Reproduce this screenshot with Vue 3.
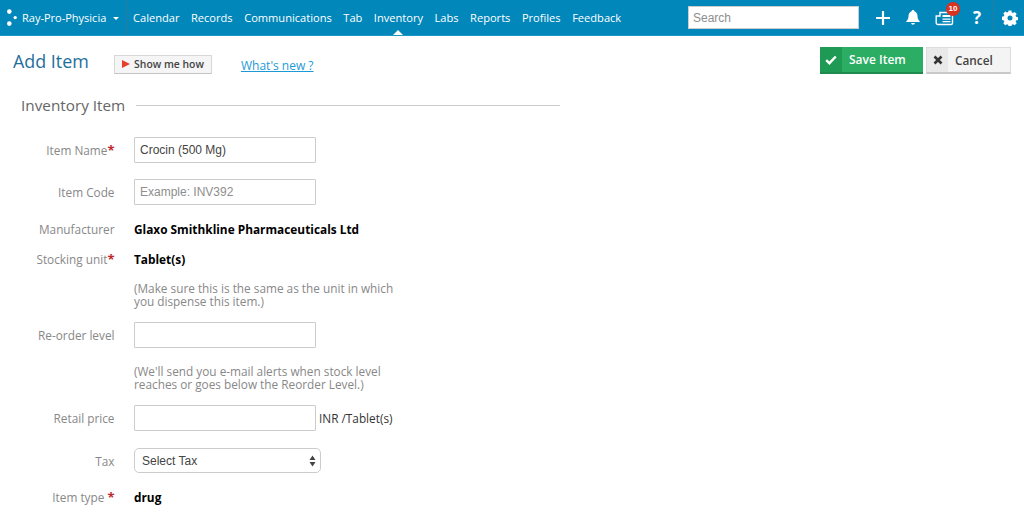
<script setup>
const navItems = ['Calendar', 'Records', 'Communications', 'Tab', 'Inventory', 'Labs', 'Reports', 'Profiles', 'Feedback']
</script>

<template>
  <div class="page">
    <header class="topbar">
      <div class="brand">
        <svg class="logo" width="12" height="18" viewBox="0 0 12 18">
          <circle cx="3.300" cy="2.600" r="2.300" fill="#fff" />
          <circle cx="9.200" cy="8.600" r="1.700" fill="#fff" />
          <circle cx="3.300" cy="14.600" r="2.300" fill="#fff" />
        </svg>
        <span class="brand-name">Ray-Pro-Physicia</span>
        <span class="caret"></span>
      </div>
      <nav class="nav">
        <a v-for="item in navItems" :key="item" class="nav-item" :class="{ active: item === 'Inventory' }">{{ item }}</a>
      </nav>
      <input class="search" placeholder="Search" />
      <div class="tools">
        <svg class="plus" width="16" height="16" viewBox="0 0 16 16"><path d="M8 1v14M1 8h14" stroke="#fff" stroke-width="2.200" /></svg>
        <svg class="bell" width="16" height="16" viewBox="0 0 16 16"><path d="M8 1c.8 0 1.300.5 1.400 1.200C11.500 3 12.500 5 12.500 7c0 2.500.8 3.800 2.200 5.200v.8H1.300v-.8C2.700 10.800 3.500 9.500 3.500 7c0-2 1-4 3.100-4.800C6.700 1.500 7.200 1 8 1zM6.200 14h3.600c0 1-.8 1.700-1.800 1.700S6.200 15 6.200 14z" fill="#fff" /></svg>
        <div class="news">
          <svg width="19" height="16" viewBox="0 0 19 16"><path d="M5 2.500h12.500v10.500a1.500 1.500 0 0 1-1.500 1.500H3a1.800 1.800 0 0 1-1.800-1.800V6H5z" fill="none" stroke="#fff" stroke-width="1.400" /><path d="M7.500 5h8v2h-8zM7.500 8.500h8v1.300h-8zM7.500 11h8v1.300h-8z" fill="#fff" /></svg>
          <span class="badge">10</span>
        </div>
        <span class="help">?</span>
        <span class="divider"></span>
        <svg class="gear" width="16" height="16" viewBox="0 0 16 16"><path fill="#fff" fill-rule="evenodd" d="M6.600.5h2.800l.4 2 1.200.5 1.700-1.100 2 2-1.100 1.700.5 1.200 2 .4v2.800l-2 .4-.5 1.200 1.100 1.700-2 2-1.700-1.100-1.200.5-.4 2H6.600l-.4-2-1.200-.5-1.700 1.100-2-2 1.100-1.700-.5-1.200-2-.4V6.700l2-.4.500-1.200-1.100-1.700 2-2 1.700 1.100 1.200-.5zM8 5.500a2.500 2.500 0 1 0 0 5 2.500 2.500 0 0 0 0-5z" /></svg>
      </div>
    </header>

    <div class="titlebar">
      <h1 class="title">Add Item</h1>
      <button class="howto"><span class="play"></span>Show me how</button>
      <a class="whatsnew">What's new ?</a>
      <div class="actions">
        <button class="save">
          <span class="save-icon"><svg width="12" height="10" viewBox="0 0 12 10"><path d="M1.200 5.200l3.200 3L10.800 1.500" fill="none" stroke="#fff" stroke-width="2.400" /></svg></span>
          <span class="save-label">Save Item</span>
        </button>
        <button class="cancel">
          <span class="cancel-icon"><svg width="10" height="10" viewBox="0 0 10 10"><path d="M1.500 1.500l7 7M8.500 1.500l-7 7" stroke="#333" stroke-width="2.600" /></svg></span>
          <span class="cancel-label">Cancel</span>
        </button>
      </div>
    </div>

    <section class="form">
      <div class="legend"><span>Inventory Item</span><i></i></div>

      <div class="row r-name">
        <label>Item Name<b>*</b></label>
        <input class="field" value="Crocin (500 Mg)" />
      </div>
      <div class="row r-code">
        <label>Item Code</label>
        <input class="field" placeholder="Example: INV392" />
      </div>
      <div class="row r-mfr">
        <label>Manufacturer</label>
        <strong>Glaxo Smithkline Pharmaceuticals Ltd</strong>
      </div>
      <div class="row r-unit">
        <label>Stocking unit<b>*</b></label>
        <strong>Tablet(s)</strong>
      </div>
      <p class="hint h-unit">(Make sure this is the same as the unit in which<br />you dispense this item.)</p>
      <div class="row r-level">
        <label>Re-order level</label>
        <input class="field" />
      </div>
      <p class="hint h-level">(We'll send you e-mail alerts when stock level<br />reaches or goes below the Reorder Level.)</p>
      <div class="row r-price">
        <label>Retail price</label>
        <input class="field" />
        <span class="unit">INR /Tablet(s)</span>
      </div>
      <div class="row r-tax">
        <label>Tax</label>
        <div class="select">
          <span>Select Tax</span>
          <svg width="7" height="12" viewBox="0 0 7 12"><path d="M3.500 0.500L6.500 5H.5zM3.500 11.500L.5 7h6z" fill="#444" /></svg>
        </div>
      </div>
      <div class="row r-type">
        <label>Item type <b>*</b></label>
        <strong>drug</strong>
      </div>
    </section>
  </div>
</template>

<style>
html, body { margin: 0; background: #fff; overflow: hidden; }
</style>

<style scoped>
.page {
  width: 1024px;
  height: 517px;
  overflow: hidden;
  font-family: "Open Sans", sans-serif;
  font-size: 12px;
  color: #222;
}
.topbar {
  height: 35px;
  background: #0287ba;
  border-bottom: 1px solid #1f96c6;
  display: flex;
  align-items: center;
  color: #fff;
}
.brand {
  width: 127px;
  height: 35px;
  box-sizing: border-box;
  border-right: 1px solid #2c7b9e;
  display: flex;
  align-items: center;
  padding-left: 6px;
}
.logo { margin-right: 4px; }
.brand-name { font-size: 11px; white-space: nowrap; }
.caret {
  margin-left: 7px;
  margin-top: 2px;
  border-left: 3px solid transparent;
  border-right: 3px solid transparent;
  border-top: 3px solid #fff;
}
.nav { display: flex; gap: 11.500px; margin-left: 6px; height: 35px; align-items: center; }
.nav-item { position: relative; font-size: 11.100px; white-space: nowrap; }
.nav-item.active::after {
  content: "";
  position: absolute;
  left: 50%;
  margin-left: -5px;
  top: 20px;
  border-left: 5px solid transparent;
  border-right: 5px solid transparent;
  border-bottom: 5px solid #fff;
}
.search {
  position: absolute;
  left: 688px;
  top: 6px;
  width: 171px;
  height: 23px;
  box-sizing: border-box;
  border: 1px solid #ccc;
  padding: 0 4px;
  font-family: "Liberation Sans", sans-serif;
  font-size: 12px;
  outline: none;
}
.search::placeholder, .field::placeholder { color: #8e8e8e; opacity: 1; }
.tools { position: absolute; left: 875px; top: 0; height: 35px; width: 149px; display: flex; align-items: center; }
.plus { margin-right: 14px; }
.bell { margin-right: 14px; margin-top: -1px; }
.news { position: relative; width: 19px; height: 16px; margin-right: 19px; }
.badge {
  position: absolute;
  left: 11px;
  top: -8px;
  width: 14px;
  height: 14px;
  border-radius: 50%;
  background: #d9321f;
  color: #fff;
  font: bold 8px/14px "Liberation Sans", sans-serif;
  text-align: center;
}
.help { font: bold 17px/1 "Open Sans", sans-serif; margin-right: 10px; width: 10px; }
.divider { width: 1px; height: 35px; background: #2c7b9e; margin-right: 8px; }
.titlebar { position: relative; height: 59px; }
.title {
  position: absolute;
  left: 13px;
  top: 12px;
  margin: 0;
  font-weight: 400;
  font-size: 17.900px;
  line-height: 26px;
  color: #1f6f9b;
}
.howto {
  position: absolute;
  left: 114px;
  top: 18.500px;
  width: 98px;
  height: 19px;
  padding: 0 0 1px;
  box-sizing: border-box;
  border: 1px solid #d8d8d8;
  border-bottom-color: #c4c4c4;
  background: #f5f5f5;
  font-family: "Open Sans", sans-serif;
  font-size: 10.400px;
  font-weight: 600;
  color: #444;
  display: flex;
  align-items: center;
  justify-content: center;
  gap: 4px;
}
.play {
  border-top: 4.500px solid transparent;
  border-bottom: 4.500px solid transparent;
  border-left: 8px solid #e6402c;
}
.whatsnew {
  position: absolute;
  left: 241px;
  top: 21px;
  font-size: 12px;
  line-height: 18px;
  color: #1d9ad6;
  text-decoration: underline;
}
.actions { position: absolute; left: 820px; top: 11px; display: flex; gap: 3px; }
.save {
  width: 103px;
  height: 27px;
  padding: 0;
  border: 0;
  border-bottom: 2px solid #1f8a4e;
  background: #2bad63;
  color: #fff;
  display: flex;
  font-family: "Open Sans", sans-serif;
  box-sizing: border-box;
}
.save-icon {
  width: 22px;
  height: 25px;
  background: #1f9a55;
  display: flex;
  align-items: center;
  justify-content: center;
}
.save-label { font-size: 12px; font-weight: 600; line-height: 25px; margin-left: 7px; }
.cancel {
  width: 85px;
  height: 27px;
  padding: 0;
  box-sizing: border-box;
  border: 1px solid #dcdcdc;
  border-bottom: 2px solid #c8c8c8;
  background: #f4f4f4;
  color: #444;
  display: flex;
  font-family: "Open Sans", sans-serif;
}
.cancel-icon {
  width: 21px;
  height: 24px;
  background: #e9e9e9;
  display: flex;
  align-items: center;
  justify-content: center;
}
.cancel-label { font-size: 11.800px; font-weight: 600; line-height: 24px; margin-left: 7px; }
.legend { display: flex; align-items: center; width: 560px; height: 20px; padding-left: 21px; box-sizing: border-box; }
.legend span { font-size: 15.300px; color: #666; line-height: 20px; }
.legend i { flex: 1; height: 1px; background: #ccc; margin-left: 11px; }
.row { display: flex; align-items: center; }
.row label {
  width: 114.500px;
  margin-right: 19.500px;
  text-align: right;
  font-size: 11.800px;
  color: #888;
  white-space: nowrap;
}
.row label b { color: #c0272d; font-weight: 700; font-size: 13px; }
.row strong { font-size: 11.850px; font-weight: 700; color: #000; }
.field {
  width: 182px;
  height: 26px;
  box-sizing: border-box;
  border: 1px solid #ccc;
  border-radius: 1px;
  padding: 0 5px;
  font-family: "Liberation Sans", sans-serif;
  font-size: 12px;
  color: #444;
  outline: none;
}
.unit { margin-left: 3px; font-size: 11.800px; color: #333; }
.select {
  width: 187px;
  height: 25px;
  box-sizing: border-box;
  border: 1px solid #ccc;
  border-radius: 5px;
  background: #fff;
  display: flex;
  align-items: center;
  justify-content: space-between;
  padding: 0 4px 0 7px;
  font-family: "Liberation Sans", sans-serif;
  font-size: 12px;
  color: #444;
}
.hint {
  margin: 0 0 0 134px;
  width: 280px;
  font-size: 11.800px;
  line-height: 12.500px;
  color: #888;
}
.r-name { margin-top: 22px; }
.r-code { margin-top: 16px; }
.r-mfr { margin-top: 15px; height: 18px; }
.r-unit { margin-top: 12px; height: 18px; }
.h-unit { margin-top: 14px; }
.r-level { margin-top: 15px; }
.h-level { margin-top: 17px; }
.r-price { margin-top: 15px; }
.r-tax { margin-top: 17px; }
.r-type { margin-top: 15px; height: 18px; }
</style>
